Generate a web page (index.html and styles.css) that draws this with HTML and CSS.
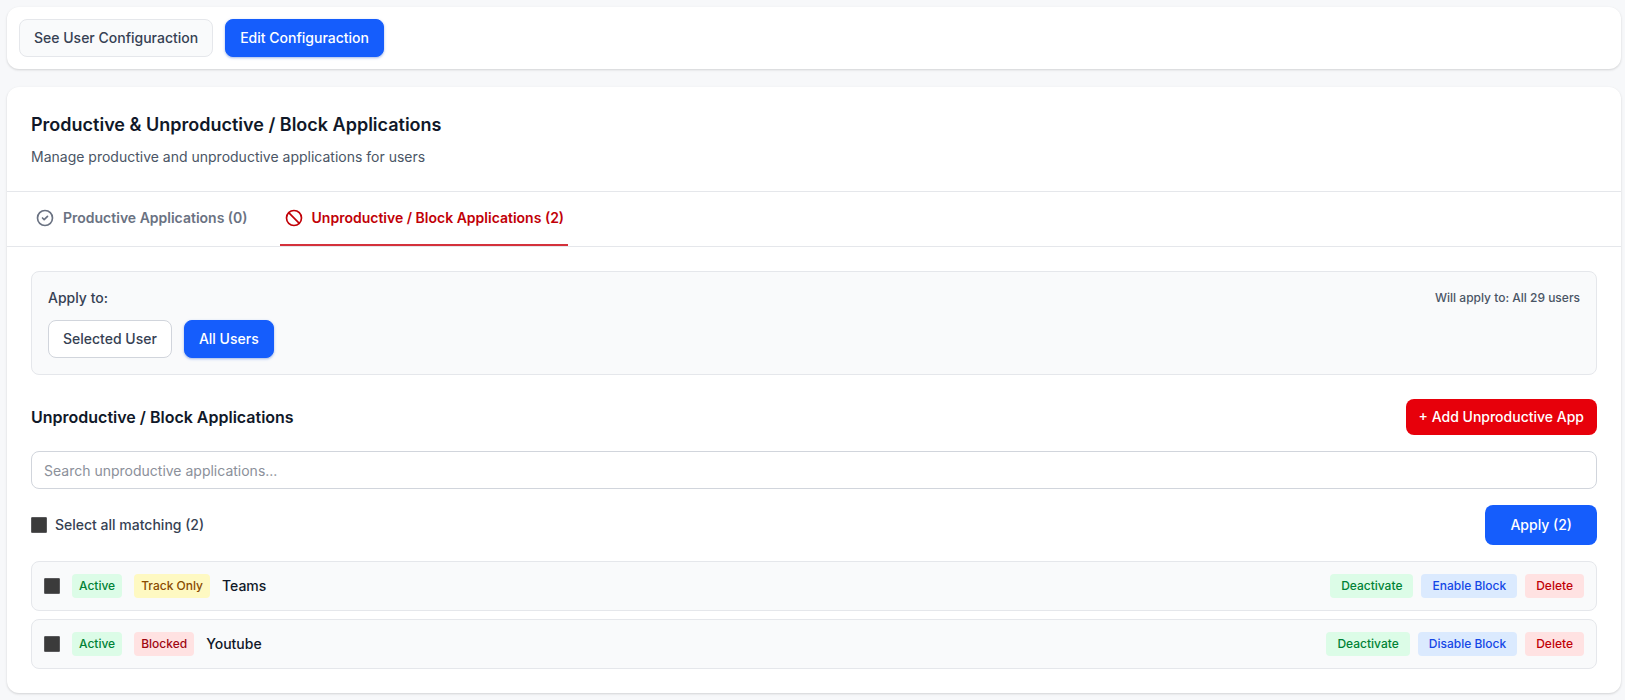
FILE: index.html
```html
<!DOCTYPE html>
<html lang="en">
<head>
<meta charset="utf-8">
<meta name="viewport" content="width=device-width, initial-scale=1">
<title>Productive &amp; Unproductive / Block Applications</title>
<link rel="stylesheet" href="styles.css">
</head>
<body>
<nav class="card toolbar">
  <button type="button" class="btn btn-muted">See User Configuraction</button>
  <button type="button" class="btn btn-primary">Edit Configuraction</button>
</nav>
<main class="card">
  <header class="card-header">
    <h1 class="title">Productive &amp; Unproductive / Block Applications</h1>
    <p class="subtitle">Manage productive and unproductive applications for users</p>
  </header>
  <div class="tabs" role="tablist">
    <button type="button" class="tab" role="tab" aria-selected="false">
      <svg class="icon" viewBox="0 0 24 24" aria-hidden="true"><path d="M9 12l2 2 4-4m6 2a9 9 0 11-18 0 9 9 0 0118 0z"/></svg>
      Productive Applications (0)
    </button>
    <button type="button" class="tab tab-active" role="tab" aria-selected="true">
      <svg class="icon" viewBox="0 0 24 24" aria-hidden="true"><path d="M18.364 18.364A9 9 0 005.636 5.636m12.728 12.728A9 9 0 015.636 5.636m12.728 12.728L5.636 5.636"/></svg>
      Unproductive / Block Applications (2)
    </button>
  </div>
  <div class="content">
    <section class="scope">
      <div class="scope-head">
        <span class="scope-label">Apply to:</span>
        <span class="scope-note">Will apply to: All 29 users</span>
      </div>
      <div class="scope-options">
        <button type="button" class="btn btn-outline">Selected User</button>
        <button type="button" class="btn btn-primary">All Users</button>
      </div>
    </section>
    <section class="apps">
      <div class="bar">
        <h2 class="section-title">Unproductive / Block Applications</h2>
        <button type="button" class="btn btn-danger">+ Add Unproductive App</button>
      </div>
      <input class="search" type="text" placeholder="Search unproductive applications..." aria-label="Search unproductive applications">
      <div class="bar">
        <label class="select-all"><input class="check" type="checkbox">Select all matching (2)</label>
        <button type="button" class="btn btn-apply">Apply (2)</button>
      </div>
      <ul class="list">
        <li class="row">
          <input class="check" type="checkbox" id="app-teams">
          <span class="badge green">Active</span>
          <span class="badge yellow">Track Only</span>
          <label class="name" for="app-teams">Teams</label>
          <div class="actions">
            <button type="button" class="action green">Deactivate</button>
            <button type="button" class="action blue">Enable Block</button>
            <button type="button" class="action red">Delete</button>
          </div>
        </li>
        <li class="row">
          <input class="check" type="checkbox" id="app-youtube">
          <span class="badge green">Active</span>
          <span class="badge blocked">Blocked</span>
          <label class="name" for="app-youtube">Youtube</label>
          <div class="actions">
            <button type="button" class="action green">Deactivate</button>
            <button type="button" class="action blue">Disable Block</button>
            <button type="button" class="action red">Delete</button>
          </div>
        </li>
      </ul>
    </section>
  </div>
</main>
</body>
</html>
```
FILE: styles.css
```css
* { box-sizing: border-box; }
body {
  margin: 0;
  padding: 7px 4px 6px 7px;
  background: #f7f8fa;
  color: #101828;
  font-family: Inter, "Liberation Sans", sans-serif;
  font-size: 14px;
  line-height: 20px;
  display: flex;
  flex-direction: column;
  gap: 18px;
}
h1, h2, p, ul { margin: 0; padding: 0; }
button, input { font: inherit; margin: 0; }
button { cursor: pointer; }
.card {
  background: #fff;
  border-radius: 12px;
  box-shadow: 0 1px 3px rgba(0, 0, 0, .1), 0 1px 2px rgba(0, 0, 0, .06);
}
.toolbar { display: flex; gap: 12px; padding: 12px; }
.btn {
  border: 1px solid transparent;
  border-radius: 8px;
  padding: 8px 14px;
  font-weight: 500;
}
.btn-muted { background: #f9fafb; border-color: #e5e7eb; color: #364153; }
.btn-outline { background: #fff; border-color: #d1d5dc; color: #364153; }
.btn-primary {
  background: #155dfc;
  border-color: #155dfc;
  color: #fff;
  box-shadow: 0 1px 3px rgba(21, 93, 252, .3), 0 1px 2px rgba(0, 0, 0, .1);
}
.btn-danger { background: #e7000b; color: #fff; border: 0; padding: 8px 13px; }
.btn-apply { background: #155dfc; color: #fff; border: 0; padding: 10px 25px; }
.card-header { padding: 24px; border-bottom: 1px solid #e5e7eb; }
.title { font-size: 18px; line-height: 28px; font-weight: 600; }
.subtitle { margin-top: 8px; color: #4a5565; }
.tabs { display: flex; gap: 28px; padding: 0 24px; border-bottom: 1px solid #e5e7eb; }
.tab {
  display: flex;
  align-items: center;
  gap: 8px;
  padding: 16px 4px;
  border: 0;
  border-bottom: 2px solid transparent;
  background: none;
  color: #6a7282;
  font-weight: 600;
}
.tab-active { color: #c10007; border-bottom-color: #d4313b; }
.icon {
  width: 20px;
  height: 20px;
  fill: none;
  stroke: currentColor;
  stroke-width: 2;
  stroke-linecap: round;
  stroke-linejoin: round;
}
.content { display: flex; flex-direction: column; gap: 24px; padding: 24px; }
.scope {
  display: flex;
  flex-direction: column;
  gap: 12px;
  padding: 16px;
  background: #f9fafb;
  border: 1px solid #e5e7eb;
  border-radius: 8px;
}
.scope-head, .bar { display: flex; align-items: center; justify-content: space-between; }
.scope-label { color: #364153; font-weight: 500; }
.scope-note { color: #4a5565; font-size: 12px; font-weight: 500; }
.scope-options { display: flex; gap: 12px; }
.apps { display: flex; flex-direction: column; gap: 16px; }
.section-title { font-size: 16px; line-height: 24px; font-weight: 600; }
.search {
  width: 100%;
  height: 38px;
  padding: 8px 12px;
  background: #fff;
  border: 1px solid #d1d5dc;
  border-radius: 8px;
}
.search::placeholder { color: #8b909a; opacity: 1; }
.select-all { display: flex; align-items: center; gap: 8px; color: #364153; font-weight: 500; }
.check {
  appearance: none;
  width: 16px;
  height: 16px;
  flex: none;
  background: #3b3b3b;
  border: 1px solid #59595b;
  border-radius: 1px;
}
.check:checked { background: #155dfc; border-color: #155dfc; }
.list { display: flex; flex-direction: column; gap: 8px; list-style: none; }
.row {
  display: flex;
  align-items: center;
  gap: 12px;
  padding: 12px;
  background: #f9fafb;
  border: 1px solid #e5e7eb;
  border-radius: 8px;
}
.badge, .action {
  border: 0;
  border-radius: 4px;
  font-size: 12px;
  line-height: 16px;
  font-weight: 500;
  padding: 4px 7px;
}
.action { padding: 4px 11px; }
.name { font-weight: 500; }
.actions { display: flex; gap: 8px; margin-left: auto; }
.green { background: #dcfce7; color: #008236; }
.yellow { background: #fef9c2; color: #894b00; }
.blocked { background: #ffe2e2; color: #9f0712; }
.blue { background: #dbeafe; color: #1447e6; }
.red { background: #ffe2e2; color: #c10007; }
```
